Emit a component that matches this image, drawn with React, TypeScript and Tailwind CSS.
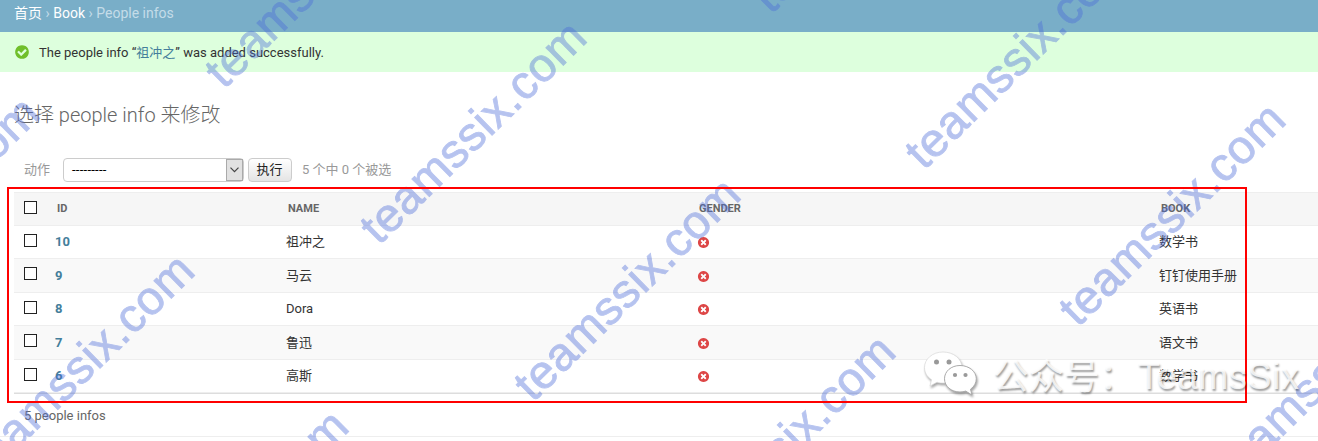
import React from "react";

const DISC =
  "m387-226q0 209-103 385.5t-279.5 279.5-385.5 103-385.5-103-279.5-279.5-103-385.5 103-385.5 279.5-279.5 385.5-103 385.5 103 279.5 279.5 103 385.5z";

function YesIcon() {
  return (
    <svg viewBox="0 0 1792 1792" className="block size-4 shrink-0">
      <path
        fill="#70bf2b"
        d="M1412 734q0-28-18-46l-91-90q-19-19-45-19t-45 19l-408 407-226-226q-19-19-45-19t-45 19l-91 90q-18 18-18 46 0 27 18 45l362 362q19 19 45 19 27 0 46-19l543-543q18-18 18-45zm252 162q0 209-103 385.5t-279.5 279.5-385.5 103-385.5-103-279.5-279.5-103-385.5 103-385.5 279.5-279.5 385.5-103 385.5 103 279.5 279.5 103 385.5z"
      />
    </svg>
  );
}

function NoIcon() {
  return (
    <svg viewBox="0 0 1792 1792" className="block size-[13px]">
      <path
        fill="#dd4646"
        d={
          "M1277 1122q0-26-19-45l-181-181 181-181q19-19 19-45 0-27-19-46l-90-90q-19-19-46-19-26 0-45 19l-181 181-181-181q-19-19-45-19-27 0-46 19l-90 90q-19 19-19 46 0 26 19 45l181 181-181 181q-19 19-19 45 0 27 19 46l90 90q19 19 46 19 26 0 45-19l181-181 181 181q19 19 45 19 27 0 46-19l90-90q19-19 19-46z" +
          DISC
        }
      />
    </svg>
  );
}

function Checkbox() {
  return (
    <input
      type="checkbox"
      className="block size-[13px] appearance-none border border-[#222] bg-white"
    />
  );
}

const rows = [
  { id: 10, name: "祖冲之", book: "数学书", style: "h-[33px] bg-white" },
  { id: 9, name: "马云", book: "钉钉使用手册", style: "h-[34px] bg-[#f9f9f9]" },
  { id: 8, name: "Dora", book: "英语书", style: "h-[33px] bg-white" },
  { id: 7, name: "鲁迅", book: "语文书", style: "h-[34px] bg-[#f9f9f9]" },
  { id: 6, name: "高斯", book: "数学书", style: "h-[33px] bg-white" },
];

const marks = [
  [-168, 322],
  [-13, 479],
  [141, 635],
  [224, 90],
  [379, 246],
  [533, 403],
  [688, 560],
  [771, 15],
  [924, 171],
  [1078, 328],
  [1233, 485],
];

function Watermarks() {
  return (
    <svg
      width="1318"
      height="441"
      className="pointer-events-none absolute top-0 left-0 font-['Liberation_Sans',sans-serif] text-[47px] tracking-[0.600px]"
    >
      {marks.map(([x, y]) => (
        <text
          key={`${x}-${y}`}
          transform={`translate(${x} ${y}) rotate(-44.4)`}
          fill="#4b6bd9"
          stroke="#4b6bd9"
          strokeWidth="0.9"
          opacity="0.4"
        >
          teamssix.com
        </text>
      ))}
    </svg>
  );
}

function AccountBadge() {
  return (
    <div className="pointer-events-none absolute top-[350px] left-[922px] flex">
      <svg
        width="60"
        height="50"
        viewBox="0 0 60 50"
        className="shrink-0 drop-shadow-[1px_2px_1px_rgba(0,0,0,0.35)]"
      >
        <path
          fill="#fff"
          stroke="#d8d8d8"
          strokeWidth="0.7"
          d="M21 2C10.500 2 2.500 9 2.500 17.500c0 5 2.600 9.300 7 12.200L8 36l7-3.800c2 .6 4 .9 7 .9 10 0 18-7 18-15.600S31.500 2 21 2z"
        />
        <path
          fill="#fff"
          stroke="#aaa"
          strokeWidth="1"
          d="M38 15.500c-8.800 0-15.500 5.800-15.500 13.300S29.200 42 38 42c2 0 4-.3 5.700-.9L50 45l-1.500-5.800c3.700-2.500 5.800-6.200 5.800-10.400 0-7.500-7.500-13.300-16.300-13.300z"
        />
        <g fill="#999">
          <circle cx="14.500" cy="12" r="2.500" />
          <circle cx="27" cy="12" r="2.500" />
          <circle cx="33" cy="25" r="2.100" />
          <circle cx="43.500" cy="25" r="2.100" />
        </g>
      </svg>
      <span className="ml-[11px] text-[35.500px] leading-[54px] whitespace-nowrap text-white/80 [text-shadow:1px_2px_2px_rgba(0,0,0,0.4)] font-['Liberation_Sans','Noto_Sans_CJK_SC',sans-serif]">
        公众号：
        <span className="ml-[3px] text-[36px] tracking-[0.700px]">TeamsSix</span>
      </span>
    </div>
  );
}

export default function App() {
  return (
    <div className="relative h-[441px] w-[1318px] overflow-hidden bg-white font-[Roboto,'Noto_Sans_CJK_SC',sans-serif] text-[13px] leading-5 text-[#333]">
      <nav className="flex h-8 items-start gap-[3.500px] bg-[#79aec8] pt-[3px] pl-[14px] text-sm leading-5 text-[#c4dce8]">
        <a className="text-white">首页</a>
        <span>›</span>
        <a className="text-white">Book</a>
        <span>›</span>
        <span>People infos</span>
      </nav>

      <div className="flex h-10 items-center gap-[9px] bg-[#ddffdd] pl-[14px]">
        <YesIcon />
        <span className="pt-[2px]">
          The people info “<a className="text-[#447e9b]">祖冲之</a>” was added
          successfully.
        </span>
      </div>

      <main className="pl-[14px]">
        <h1 className="pt-[31px] text-[20px] leading-6 font-light text-[#666]">
          选择 people info 来修改
        </h1>

        <div className="mt-[31px] flex h-6 items-center pl-[10px] text-[#999]">
          <span>动作</span>
          <div className="ml-[13px] flex h-6 w-[181px] justify-between rounded border border-[#ccc] bg-white text-black">
            <span className="pl-2 leading-[21px] tracking-[0.250px]">---------</span>
            <span className="flex w-[17px] items-center justify-center border border-[#aaa] bg-[#e1e1e1]">
              <svg width="9" height="6" viewBox="0 0 9 6" fill="none">
                <path d="M.5 .700l4 4 4-4" stroke="#444" strokeWidth="1.200" />
              </svg>
            </span>
          </div>
          <button className="ml-1 h-6 w-11 rounded border border-[#ccc] bg-linear-to-b from-white to-[#e4e4e4] pr-px leading-5 text-[#222]">
            执行
          </button>
          <span className="ml-[10px]">5 个中 0 个被选</span>
        </div>

        <section className="mt-[10px] border-t border-[#eee]">
          <div className="grid h-[33px] grid-cols-[33px_231px_411px_462px_1fr] items-center border-b border-[#eee] bg-[#f6f6f6] pl-[10px] text-[11px] font-bold text-[#666]">
            <div className="pb-[3px]">
              <Checkbox />
            </div>
            <span>ID</span>
            <span>NAME</span>
            <span>GENDER</span>
            <span>BOOK</span>
          </div>
          {rows.map((row) => (
            <div
              key={row.id}
              className={`grid grid-cols-[31px_231px_411px_462px_1fr] items-center border-b border-[#eee] pl-[10px] ${row.style}`}
            >
              <div className="pb-[4px]">
                <Checkbox />
              </div>
              <a className="font-bold text-[#447e9b]">{row.id}</a>
              <span>{row.name}</span>
              <span className="pt-[1px]">
                <NoIcon />
              </span>
              <span>{row.book}</span>
            </div>
          ))}
        </section>
        <div className="-ml-[14px] border-b border-[#eee]">
          <div className="ml-[14px] h-[43px] border-t border-[#ddd] pt-[12px] pl-[10px] text-[#666]">
            5 people infos
          </div>
        </div>
      </main>

      <Watermarks />
      <div className="pointer-events-none absolute top-[187px] left-[7px] h-[216px] w-[1240px] border-2 border-[#f00]" />
      <AccountBadge />
    </div>
  );
}
